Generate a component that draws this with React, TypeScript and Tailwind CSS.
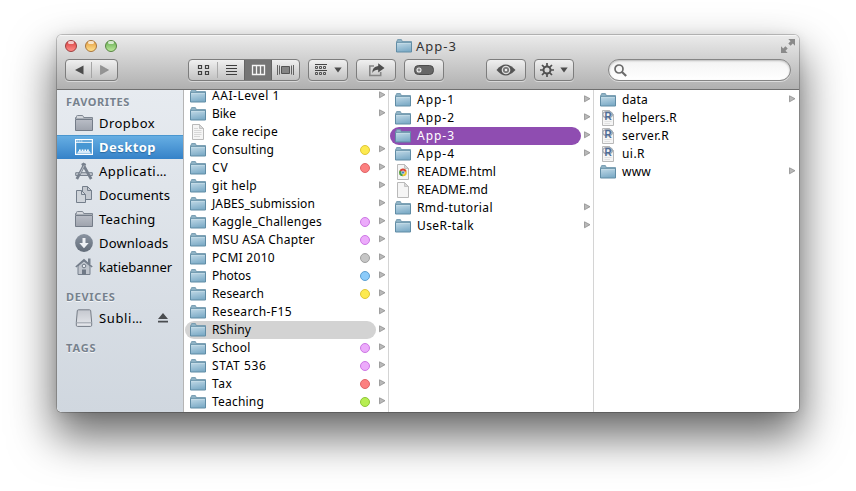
import React, { useLayoutEffect, useRef, useState } from "react";

function Label({ text, w, className = "" }: { text: string; w: number; className?: string }) {
  const ref = useRef<HTMLSpanElement>(null);
  const [spacing, setSpacing] = useState(0);
  useLayoutEffect(() => {
    if (ref.current) {
      const natural = ref.current.getBoundingClientRect().width - spacing * text.length;
      setSpacing((w + 1 - natural) / text.length);
    }
  }, [text, w]);
  return (
    <span ref={ref} className={`inline-block whitespace-nowrap ${className}`} style={{ letterSpacing: spacing }}>
      {text}
    </span>
  );
}

function Defs() {
  return (
    <svg className="absolute h-0 w-0" aria-hidden="true">
      <defs>
        <linearGradient id="blue" x1="0" y1="0" x2="0.3" y2="1">
          <stop offset="0" stopColor="#c3dbe8" />
          <stop offset="1" stopColor="#7fadc8" />
        </linearGradient>
        <linearGradient id="grayFolder" x1="0" y1="0" x2="0" y2="1">
          <stop offset="0" stopColor="#b9bdc6" />
          <stop offset="1" stopColor="#9ea3ad" />
        </linearGradient>
        <linearGradient id="slate" x1="0" y1="0" x2="0" y2="1">
          <stop offset="0" stopColor="#8a94a1" />
          <stop offset="1" stopColor="#626c79" />
        </linearGradient>
        <linearGradient id="drive" x1="0" y1="0" x2="0" y2="1">
          <stop offset="0" stopColor="#c5c8cf" />
          <stop offset="1" stopColor="#e6e8ec" />
        </linearGradient>
      </defs>
    </svg>
  );
}

function Folder() {
  return (
    <svg width="16" height="14" viewBox="0 0 16 14" className="shrink-0">
      <path d="M.5 3.5V2.5H1.3V1.2Q1.3 .5 2 .5H5Q5.7 .5 5.8 1.2L6 2.5H15.5V4Z" fill="#8eb2c5" stroke="#6b93aa" strokeWidth=".8" />
      <path d="M.5 3.5H15.5V13H.5Z" fill="url(#blue)" stroke="#608ca5" />
      <path d="M1.2 4.2H14.8" stroke="#d5e7f0" strokeWidth=".6" />
    </svg>
  );
}

function Doc({ kind }: { kind: string }) {
  return (
    <svg width="16" height="16" viewBox="0 0 16 16" className="shrink-0">
      <path d="M2.5 .5H9.5L13.5 4.5V15.5H2.5Z" fill="#f5f5f5" stroke="#b9b9b9" />
      <path d="M9.5 .5V4.5H13.5Z" fill="#d8d8d8" stroke="#b5b5b5" strokeWidth=".7" />
      {kind === "text" && <path d="M4 4.5H8M4 6.5H11.5M4 8.5H11.5M4 10.5H11.5M4 12.5H10" stroke="#cfcfcf" strokeWidth=".8" />}
      {kind === "html" && (
        <g>
          <circle cx="8" cy="8.5" r="3.8" fill="#eac530" />
          <path d="M8 8.5L4.6 6.6A3.8 3.8 0 0 1 11.5 6.9Z" fill="#d9403a" />
          <path d="M8 8.5L4.6 6.6A3.8 3.8 0 0 0 7.4 12.2Z" fill="#3d9c50" />
          <circle cx="8" cy="8.5" r="1.6" fill="#447fc4" stroke="#fff" strokeWidth=".6" />
        </g>
      )}
      {kind === "r" && (
        <g>
          <ellipse cx="7.6" cy="4.6" rx="4.9" ry="3.1" fill="none" stroke="#a3abb6" strokeWidth="1.5" />
          <text x="4.6" y="9.6" fontSize="10" fontWeight="700" fill="#4f6c96" fontFamily="Liberation Sans, sans-serif">R</text>
          <path d="M4.5 11.5H11.5M4.5 13.5H10" stroke="#d8d8d8" strokeWidth=".7" />
        </g>
      )}
    </svg>
  );
}

function Arrow({ className }: { className: string }) {
  return (
    <svg width="7" height="8" viewBox="0 0 7 8" className={`absolute top-[4px] ${className}`}>
      <path d="M.5 .8L6 3.7L.5 6.8Z" fill="#b9b9b9" stroke="#8f8f8f" strokeWidth=".8" />
    </svg>
  );
}

type Item = { name: string; w: number; kind?: string; dot?: string; sel?: string };

const yellow = "bg-[#fdea4f] border-[#dfc637]";
const red = "bg-[#fc8080] border-[#e06468]";
const violet = "bg-[#ecabfb] border-[#cd77e4]";
const gray = "bg-[#c6c6c6] border-[#a0a0a0]";
const azure = "bg-[#8bcbfa] border-[#5d9fd0]";
const green = "bg-[#b7ee52] border-[#8fc638]";

const first: Item[] = [
  { name: "AAI-Level 1", w: 67 },
  { name: "Bike", w: 23 },
  { name: "cake recipe", w: 65, kind: "text" },
  { name: "Consulting", w: 61, dot: yellow },
  { name: "CV", w: 15.5, dot: red },
  { name: "git help", w: 44 },
  { name: "JABES_submission", w: 102 },
  { name: "Kaggle_Challenges", w: 109, dot: violet },
  { name: "MSU ASA Chapter", w: 102, dot: violet },
  { name: "PCMI 2010", w: 62, dot: gray },
  { name: "Photos", w: 38, dot: azure },
  { name: "Research", w: 51, dot: yellow },
  { name: "Research-F15", w: 79 },
  { name: "RShiny", w: 38, sel: "bg-[#d3d3d3]" },
  { name: "School", w: 37.5, dot: violet },
  { name: "STAT 536", w: 53.5, dot: violet },
  { name: "Tax", w: 19.5, dot: red },
  { name: "Teaching", w: 51, dot: green },
];
const second: Item[] = [
  { name: "App-1", w: 37 },
  { name: "App-2", w: 37 },
  { name: "App-3", w: 37, sel: "bg-[#8f4db1] text-white" },
  { name: "App-4", w: 37 },
  { name: "README.html", w: 78, kind: "html" },
  { name: "README.md", w: 70, kind: "plain" },
  { name: "Rmd-tutorial", w: 75 },
  { name: "UseR-talk", w: 56 },
];
const third: Item[] = [
  { name: "data", w: 25 },
  { name: "helpers.R", w: 54, kind: "r" },
  { name: "server.R", w: 46, kind: "r" },
  { name: "ui.R", w: 22, kind: "r" },
  { name: "www", w: 28 },
];

function Column({ items, className, arrow }: { items: Item[]; className: string; arrow: string }) {
  return (
    <div className={className}>
      {items.map((it) => (
        <div key={it.name} className="relative h-[18px] pl-px pr-3">
          <div className={`flex h-[18px] items-center rounded-full pl-[5px] pr-[6px] ${it.sel ?? ""}`}>
            {it.kind ? <Doc kind={it.kind} /> : <Folder />}
            <Label text={it.name} w={it.w} className="ml-[6px] leading-[12px]" />
            {it.dot && <span className={`ml-auto h-[10px] w-[10px] rounded-full border ${it.dot}`} />}
          </div>
          {!it.kind && <Arrow className={arrow} />}
        </div>
      ))}
    </div>
  );
}

function SideIcon({ kind }: { kind: string }) {
  return (
    <svg width="18" height="18" viewBox="0 0 18 18" className="shrink-0">
      {kind === "folder" && (
        <g>
          <path d="M.5 5V3.5H1.5V2.5Q1.5 1.5 2.5 1.5H7Q8 1.5 8.3 2.3L8.7 3.5H17.5V5Z" fill="#d4d7dc" stroke="#7f8792" />
          <path d="M.5 5.5H17.5V16.5H.5Z" fill="url(#grayFolder)" stroke="#747c88" />
        </g>
      )}
      {kind === "desktop" && (
        <g>
          <rect x=".6" y="1.6" width="16.8" height="14.8" fill="#4797d3" stroke="#fff" strokeWidth="1.2" />
          <path d="M1 4.3H17" stroke="#fff" />
          <path d="M2.3 3H3.3M4.3 3H5.3M6.3 3H7.3" stroke="#fff" />
          <path d="M3.5 13L2 15.6H16L14.5 13Z" fill="#d7eafa" />
          <path d="M4 12.3H5.7M6.7 12.3H8.4M9.4 12.3H11.1M12.1 12.3H13.8" stroke="#fff" strokeWidth="1.4" />
        </g>
      )}
      {kind === "apps" && (
        <g fill="none" stroke="#77808d">
          <path d="M.7 10.7H17.3V13.5H.7Z" fill="#c5cad2" />
          <path d="M10 1.3L3 14.8L1.8 17" strokeWidth="2.8" />
          <path d="M7.4 1.3L14.8 14.6L16.2 17" strokeWidth="2.8" />
          <path d="M9.2 3.4L4.8 12" stroke="#c9ced5" strokeWidth=".8" />
        </g>
      )}
      {kind === "docs" && (
        <g fill="#c4c9d0" stroke="#747e8b">
          <path d="M7.5 .5H12.5L16.5 4.5V13.5H7.5Z" />
          <path d="M12.5 .5V4.5H16.5" fill="none" />
          <path d="M1.5 4.5H6.5L10.5 8.5V16.5H1.5Z" fill="#cfd4da" />
          <path d="M6.5 4.5V8.5H10.5" fill="none" />
        </g>
      )}
      {kind === "down" && (
        <g>
          <circle cx="9" cy="9" r="8.9" fill="url(#slate)" />
          <path d="M7.5 4H10.5V9H13.7L9 14.3L4.3 9H7.5Z" fill="#eef1f5" />
        </g>
      )}
      {kind === "home" && (
        <g>
          <path d="M3 8L9 3L15 8V16.5H3Z" fill="#c0c5cd" stroke="#77808d" />
          <path d="M13 .5H15.5V6H13Z" fill="#77808d" />
          <path d="M.8 9L9 1.8L17.2 9" fill="none" stroke="#747d8a" strokeWidth="1.6" />
          <circle cx="9" cy="8" r="1.8" fill="#e8ebef" stroke="#6f7986" />
          <path d="M7 11.5H11V16.5H7Z" fill="#6f7986" />
        </g>
      )}
      {kind === "drive" && (
        <g>
          <path d="M3.5 .8H14.5Q15.6 .8 15.7 1.8L16.7 13.5V16.2Q16.7 17.4 15.5 17.4H2.5Q1.3 17.4 1.3 16.2V13.5L2.3 1.8Q2.4 .8 3.5 .8Z" fill="url(#drive)" stroke="#757c86" />
          <path d="M1.5 13.8H16.5" stroke="#949aa4" strokeWidth=".9" />
        </g>
      )}
    </svg>
  );
}

const favorites = [
  { name: "Dropbox", w: 55, icon: "folder" },
  { name: "Desktop", w: 56, icon: "desktop", sel: true },
  { name: "Applicati…", w: 67, icon: "apps" },
  { name: "Documents", w: 70, icon: "docs" },
  { name: "Teaching", w: 55.5, icon: "folder" },
  { name: "Downloads", w: 68.5, icon: "down" },
  { name: "katiebanner", w: 72, icon: "home" },
];

function Heading({ text, w, className }: { text: string; w: number; className: string }) {
  return (
    <div className={`pl-[9px] text-[11px] font-bold leading-[22px] text-[#76818d] [text-shadow:0_1px_0_#f4f6f8] ${className}`}>
      <Label text={text} w={w} />
    </div>
  );
}

const btn = "flex h-[22px] items-center justify-center rounded-[4px] border border-[#7d7d7d] bg-linear-to-b from-[#f0f0f0] to-[#c2c2c2] shadow-[0_1px_0_#d8d8d8]";

function Light({ colors }: { colors: string }) {
  return (
    <span className={`relative block h-3 w-3 rounded-full border ${colors}`}>
      <span className="absolute left-[2px] top-0 h-[3px] w-[6px] rounded-full bg-white/70" />
    </span>
  );
}

function Caret() {
  return (
    <svg width="8" height="6" viewBox="0 0 8 6">
      <path d="M.3 .5H7.7L4 5.5Z" fill="#4c4c4c" />
    </svg>
  );
}

export default function App() {
  return (
    <div className="h-[491px] w-[856px] overflow-hidden bg-white pl-[57px] pt-[35px] font-['Noto_Sans','Open_Sans',sans-serif] text-[12px] text-black">
      <Defs />
      <div className="h-[377px] w-[742px] rounded-[5px] shadow-[0_0_0_1px_rgba(0,0,0,0.2),0_22px_44px_3px_rgba(0,0,0,0.58),0_2px_12px_rgba(0,0,0,0.1)]">
        <div className="flex h-full flex-col overflow-hidden rounded-[5px]">
          <header className="h-[55px] shrink-0 border-b border-[#6f6f6f] bg-linear-to-b from-[#ebebeb] to-[#b0b0b0] shadow-[inset_0_1px_0_#f6f6f6]">
            <div className="flex h-[24px] items-center pl-2 pr-[4px]">
              <div className="flex w-[331px] gap-2 pb-[2px]">
                <Light colors="border-[#9c3d3d] bg-linear-to-b from-[#d83b40] to-[#ff8c88]" />
                <Light colors="border-[#a8743a] bg-linear-to-b from-[#e39c3c] to-[#ffe08c]" />
                <Light colors="border-[#56843f] bg-linear-to-b from-[#65ad50] to-[#bbe89b]" />
              </div>
              <div className="flex items-center pb-[2px] text-[13px] text-[#333]">
                <Folder />
                <Label text="App-3" w={40} className="ml-1 leading-[20px]" />
              </div>
              <svg width="14" height="14" viewBox="0 0 14 14" className="ml-auto mb-[3px]">
                <path d="M7.3 0H14V6.7L11.8 4.5L9.6 6.7L7.3 4.4L9.5 2.2Z" fill="#8a8a8a" />
                <path d="M0 7.3L2.2 9.5L4.4 7.3L6.7 9.6L4.5 11.8L6.7 14H0Z" fill="#8a8a8a" />
              </svg>
            </div>
            <div className="flex items-center pl-2 pr-2">
              <div className={`${btn} w-[53px]`}>
                <svg width="51" height="20" viewBox="0 0 51 20">
                  <path d="M17.5 5.5V14.5L9 10Z" fill="#4c4c4c" />
                  <path d="M25.5 2V18" stroke="#a5a5a5" />
                  <path d="M34.5 5.5V14.5L42.5 10Z" fill="#949494" stroke="#828282" strokeWidth=".6" />
                </svg>
              </div>
              <div className={`${btn} ml-[70px] w-[112px] overflow-hidden`}>
                <svg width="110" height="20" viewBox="0 0 110 20" fill="none">
                  <path d="M28.5 2V18" stroke="#aaa" />
                  <path d="M9.5 5.5h3v3h-3zM16.5 5.5h3v3h-3zM9.5 11.5h3v3h-3zM16.5 11.5h3v3h-3z" stroke="#404040" strokeWidth="1.2" />
                  <path d="M37 5.5H48M37 8.5H48M37 11.5H48M37 14.5H48" stroke="#3e3e3e" />
                  <path d="M55 0H83V20H55Z" fill="#757575" />
                  <path d="M55.5 0V20M82.5 0V20" stroke="#656565" />
                  <path d="M63.5 5.5h12v9h-12zM67.5 5.5v9M71.5 5.5v9" stroke="#f5f5f5" strokeWidth="1.3" />
                  <path d="M92.5 6.5h8v7h-8z" fill="#858585" stroke="#555" />
                  <path d="M88.5 5V15M90.5 5.5V14.5M102.5 5.5V14.5M104.5 5V15" stroke="#555" strokeWidth=".9" />
                </svg>
              </div>
              <div className={`${btn} ml-2 w-[40px] gap-[7px]`}>
                <svg width="12" height="12" viewBox="0 0 12 12" fill="none" stroke="#444">
                  <path d="M0 .5H12M0 6.5H12" strokeWidth="1" />
                  <path d="M.5 2.5h2v2h-2zM4.5 2.5h2v2h-2zM8.5 2.5h2v2h-2zM.5 8.5h2v2h-2zM4.5 8.5h2v2h-2zM8.5 8.5h2v2h-2z" strokeWidth=".9" />
                </svg>
                <Caret />
              </div>
              <div className={`${btn} ml-2 w-[40px]`}>
                <svg width="17" height="14" viewBox="0 0 17 14">
                  <path d="M6 3H1.8V12.5H12.7V9" fill="none" stroke="#858585" strokeWidth="1.6" />
                  <path d="M10.2 .2L16.5 5L10.2 9.5V6.8Q6.5 6.6 4.2 10Q4.3 3.5 10.2 3Z" fill="#4e4e4e" />
                </svg>
              </div>
              <div className={`${btn} ml-2 w-[40px]`}>
                <svg width="20" height="10" viewBox="0 0 20 10">
                  <rect x=".5" y=".5" width="19" height="9" rx="4" fill="#666" stroke="#4c4c4c" />
                  <circle cx="5" cy="5" r="2" fill="#8a8a8a" stroke="#eee" strokeWidth="1.1" />
                </svg>
              </div>
              <div className={`${btn} ml-[42px] w-[40px]`}>
                <svg width="20" height="12" viewBox="0 0 20 12">
                  <path d="M.5 6Q9.5-5 19.5 6Q10 17 .5 6Z" fill="#555" />
                  <circle cx="10" cy="6" r="3.7" fill="#777" stroke="#ddd" strokeWidth="1.3" />
                  <circle cx="10" cy="6" r="1.3" fill="#eee" />
                </svg>
              </div>
              <div className={`${btn} ml-2 w-[40px] gap-[6px]`}>
                <svg width="14" height="14" viewBox="0 0 14 14" fill="none" stroke="#505050">
                  <circle cx="7" cy="7" r="3.5" strokeWidth="2" />
                  <path d="M7 0V3M7 11V14M0 7H3M11 7H14M2 2L4.2 4.2M9.8 9.8L12 12M12 2L9.8 4.2M4.2 9.8L2 12" strokeWidth="1.7" />
                </svg>
                <Caret />
              </div>
              <div className="ml-auto flex h-[22px] w-[183px] items-center rounded-full border border-[#858585] bg-linear-to-b from-[#f3f3f3] to-white pl-[5px] shadow-[inset_0_1px_2px_#bbb,0_1px_0_#ddd]">
                <svg width="13" height="13" viewBox="0 0 13 13" fill="none" stroke="#6b6b6b">
                  <circle cx="5" cy="5" r="4" strokeWidth="1.7" />
                  <path d="M8 8L12.2 12" strokeWidth="2.2" />
                </svg>
              </div>
            </div>
          </header>
          <main className="flex h-[322px] bg-white">
            <nav className="w-[127px] shrink-0 border-r border-[#b5b5b5] bg-linear-to-b from-[#e7ebf0] to-[#d0d7df] text-[13px]">
              <Heading text="FAVORITES" w={63} className="h-[21px] pt-px" />
              {favorites.map((f) => (
                <div key={f.name} className={`flex h-6 items-center pl-[18px] ${f.sel ? "bg-linear-to-b from-[#68b0e4] to-[#3582c8] font-bold text-white shadow-[inset_0_1px_0_#4a96cf] [text-shadow:0_1px_1px_#28699f]" : ""}`}>
                  <SideIcon kind={f.icon} />
                  <Label text={f.name} w={f.w} className="ml-[6px] leading-6" />
                </div>
              ))}
              <Heading text="DEVICES" w={48.5} className="mt-[7px] h-[20px]" />
              <div className="flex h-6 items-center pl-[18px]">
                <SideIcon kind="drive" />
                <Label text="Subli…" w={43} className="ml-[6px] leading-6" />
                <svg width="10" height="10" viewBox="0 0 10 10" className="ml-[15px]">
                  <path d="M5 0L10 6H0ZM0 7.7H10V9.5H0Z" fill="#4a4d50" />
                </svg>
              </div>
              <Heading text="TAGS" w={29.5} className="mt-[7px]" />
            </nav>
            <div className="w-[205px] shrink-0 overflow-hidden border-r border-[#d4d4d4]">
              <Column items={first} className="-mt-[3px]" arrow="right-[2px]" />
            </div>
            <div className="w-[205px] shrink-0 border-r border-[#d4d4d4]">
              <Column items={second} className="pt-px" arrow="right-[2px]" />
            </div>
            <div className="w-[205px] shrink-0">
              <Column items={third} className="pt-px" arrow="right-[3px]" />
            </div>
          </main>
        </div>
      </div>
    </div>
  );
}
